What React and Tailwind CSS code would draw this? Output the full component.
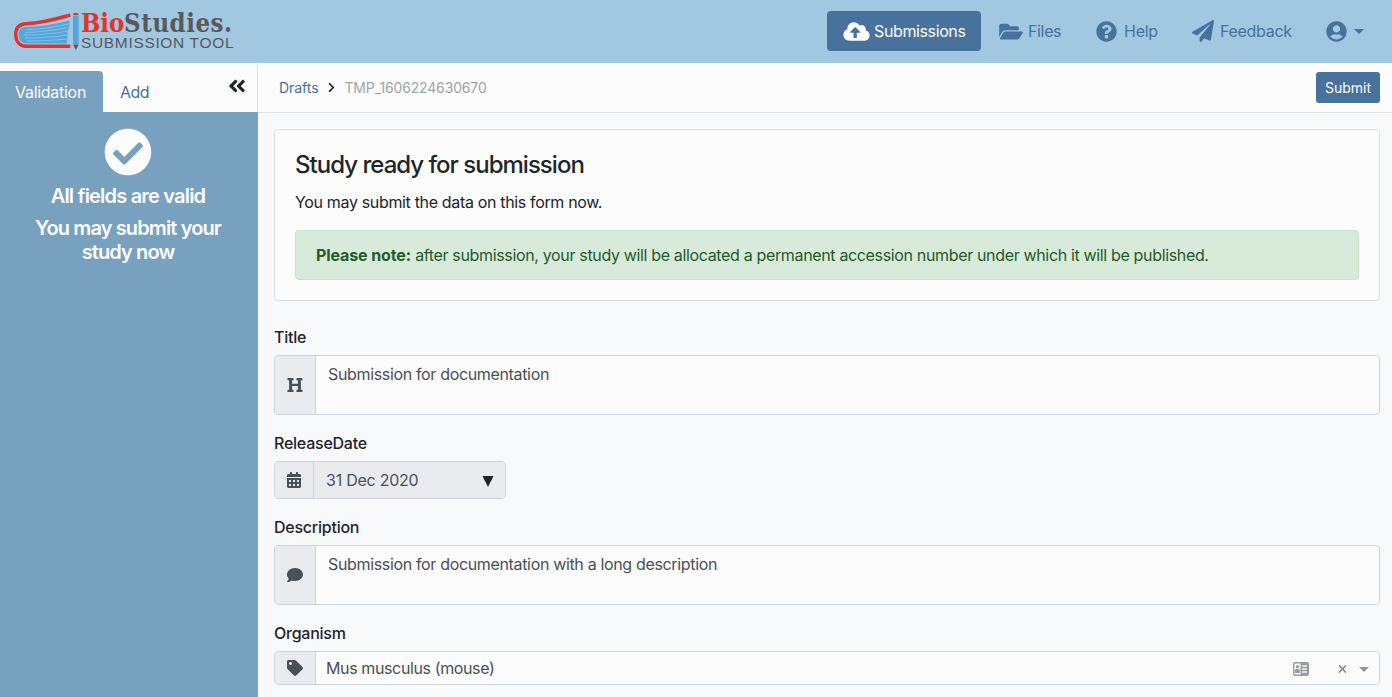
import React from "react";
import {
  FaAngleDoubleLeft,
  FaCalendarAlt,
  FaCheckCircle,
  FaChevronRight,
  FaCloudUploadAlt,
  FaComment,
  FaFolderOpen,
  FaPaperPlane,
  FaQuestionCircle,
  FaTag,
  FaUserCircle,
} from "react-icons/fa";

function Logo() {
  return (
    <div className="flex h-[62px] items-start pl-3 pt-2.5">
      <svg className="block shrink-0" width="69" height="42" viewBox="12 10 69 42" role="img" aria-label="BioStudies">
        <path d="M70.300 15C58 18.500 44 23 26 23.700C19 24 15.700 28 15.700 34.500C15.700 42 20 46.300 27 46.300H70.300" fill="none" stroke="#e0352f" strokeWidth="3.400" />
        <path d="M69.500 20.500C56 24 40 26.600 27 26.800C21 27 18.500 29.500 18.500 35C18.500 40.500 22 43.500 28 43.500H66.500L67.500 39V32L69.500 26Z" fill="#54a7dd" />
        <g fill="none" stroke="#a2c7e1" strokeWidth="0.700">
          <path d="M27 29.500C42 29.500 55 27 69 23.800" />
          <path d="M25 32.300C42 32.300 54 30 68.500 27.500" />
          <path d="M24 35C42 35 54 33.500 68 31" />
          <path d="M25 38C42 38 54 37 67.500 35" />
          <path d="M27 41C42 41 54 40.300 67.500 39" />
        </g>
        <rect x="73" y="16" width="5.700" height="28" fill="#54a7dd" />
        <path d="M73 15.200C73 12 78.700 12 78.700 15.200Z" fill="#e0352f" />
        <path d="M73 44.500H78.700L75.900 50Z" fill="#58595b" />
      </svg>
      <div className="flex flex-col whitespace-nowrap">
        <div className="h-[25px] font-['DejaVu_Serif_Condensed','DejaVu_Serif',serif] text-[25.500px] font-bold leading-[26px] tracking-[0.550px] text-[#58595b]">
          <span className="tracking-[-0.100px] text-[#e0352f]">Bio</span>Studies.
        </div>
        <div className="h-4 font-['Liberation_Sans',sans-serif] text-[15.500px] leading-4 tracking-[0.660px] text-[#58595b]">SUBMISSION TOOL</div>
      </div>
    </div>
  );
}

function HeadingIcon() {
  return (
    <svg width="16" height="14" viewBox="0 0 16 14" fill="currentColor">
      <path d="M0.500 0H6.500V2.200H5.100V5.700H10.900V2.200H9.500V0H15.500V2.200H13.900V11.800H15.500V14H9.500V11.800H10.900V8.100H5.100V11.800H6.500V14H0.500V11.800H2.100V2.200H0.500Z" />
    </svg>
  );
}

function Header() {
  return (
    <header className="flex h-[63px] shrink-0 items-start justify-between bg-[#a2c7e1] text-[#48729b]">
      <Logo />
      <nav className="mt-[11px] flex h-10 items-center pr-[28px]">
        <a className="flex h-10 w-[154px] items-center rounded bg-[#48729b] pl-4 text-[#fcfcfc]">
          <FaCloudUploadAlt className="h-[21px] w-[27px] shrink-0" />
          <span className="ml-1 tracking-[-0.380px]">Submissions</span>
        </a>
        <a className="ml-[18px] flex w-[63px] items-center">
          <FaFolderOpen className="h-[21px] w-6 shrink-0" />
          <span className="ml-[5px] tracking-[-0.350px]">Files</span>
        </a>
        <a className="ml-[34px] flex w-[63px] items-center">
          <FaQuestionCircle className="size-[21px] shrink-0" />
          <span className="ml-[7px] tracking-[-0.250px]">Help</span>
        </a>
        <a className="ml-[33px] flex w-[100px] items-center">
          <FaPaperPlane className="size-[22px] shrink-0" />
          <span className="ml-[6px] tracking-[-0.300px]">Feedback</span>
        </a>
        <a className="ml-[34px] flex items-center">
          <FaUserCircle className="size-[21px] shrink-0" />
          <svg className="ml-[7px]" width="10" height="5" viewBox="0 0 10 5">
            <path d="M0 0H10L5 5Z" fill="currentColor" />
          </svg>
        </a>
      </nav>
    </header>
  );
}

function Sidebar() {
  return (
    <aside className="flex w-[258px] shrink-0 flex-col bg-[#78a0bf]">
      <div className="flex h-[49px] items-end border-r border-[#dee2e6] bg-[#fcfcfc]">
        <div className="flex h-[41px] w-[103px] items-center rounded-tr bg-[#78a0bf] pl-[15px] pt-px tracking-[-0.280px] text-[#fcfcfc]">Validation</div>
        <div className="flex h-[41px] items-center pl-[17px] pt-px tracking-[-0.600px] text-[#48729b]">Add</div>
        <FaAngleDoubleLeft className="mb-[16px] ml-auto mr-[10px] size-[20px] text-[#212529]" />
      </div>
      <div className="flex flex-col items-center pr-[2px] pt-4 text-center text-[20px] font-semibold leading-6 text-[#fcfcfc]">
        <FaCheckCircle className="size-[48px]" />
        <p className="mt-2 tracking-[-0.800px]">All fields are valid</p>
        <p className="mt-2 w-[200px] tracking-[-0.880px]">You may submit your study now</p>
      </div>
    </aside>
  );
}

function Field({ label, icon, addon, box, children }) {
  return (
    <div className="flex flex-col">
      <label className="mb-1.5 h-6 font-medium leading-6 tracking-[-0.240px] text-[#212529]">{label}</label>
      <div className={`flex overflow-hidden rounded border border-[#ced4da] bg-[#fcfcfc] text-[#495057] ${box}`}>
        <div className={`flex shrink-0 items-center justify-center border-r border-[#ced4da] bg-[#e9ebef] ${addon}`}>{icon}</div>
        {children}
      </div>
    </div>
  );
}

export default function App() {
  return (
    <div className="flex h-[697px] w-[1392px] flex-col overflow-hidden font-[Inter,sans-serif] text-base text-[#212529]">
      <Header />
      <div className="flex min-h-0 flex-1">
        <Sidebar />
        <main className="flex min-w-0 flex-1 flex-col bg-[#f8f9fb]">
          <div className="flex h-[50px] shrink-0 items-center border-b border-[#dee0e3] bg-[#fcfcfc] pl-[21px] pr-3 text-sm">
            <a className="tracking-[-0.050px] text-[#48729b]">Drafts</a>
            <FaChevronRight className="ml-2 size-[11px]" />
            <span className="ml-[7px] tracking-[-0.150px] text-[#a0a4a9]">TMP_1606224630670</span>
            <button className="ml-auto h-[31px] w-16 rounded-[3px] bg-[#48729b] text-[#fcfcfc]">Submit</button>
          </div>
          <div className="flex flex-col px-4 pr-3 pt-4">
            <section className="h-[172px] rounded border border-[#dcdee1] bg-[#fcfcfc] px-5 pt-5">
              <h1 className="text-2xl font-medium leading-[29px] tracking-[-0.980px]">Study ready for submission</h1>
              <p className="mt-[11px] leading-6 tracking-[-0.340px]">You may submit the data on this form now.</p>
              <div className="mt-4 flex h-[50px] items-center whitespace-pre rounded border border-[#c3e6cb] bg-[#d8ebda] px-5 tracking-[-0.345px] text-[#255a2b]">
                <b className="font-bold tracking-[-0.110px]">Please note:</b> after submission, your study will be allocated a permanent accession number under which it will be published.
              </div>
            </section>
            <form className="flex flex-col gap-4 pt-6">
              <Field label="Title" icon={<HeadingIcon />} addon="w-[41px]" box="h-[60px]">
                <div className="px-3 pt-1.5 tracking-[-0.340px]">Submission for documentation</div>
              </Field>
              <Field label="ReleaseDate" icon={<FaCalendarAlt className="size-4" />} addon="w-[39px]" box="h-[38px] w-[232px]">
                <div className="flex flex-1 items-center justify-between bg-[#e9ebef] pl-3 pr-[11px]">
                  <span className="tracking-[-0.250px]">31 Dec 2020</span>
                  <svg className="mt-0.5" width="12" height="11" viewBox="0 0 12 11">
                    <path d="M0.500 0H11.500L6 11Z" fill="#212529" />
                  </svg>
                </div>
              </Field>
              <Field label="Description" icon={<FaComment className="size-4" />} addon="w-[41px]" box="h-[60px]">
                <div className="px-3 pt-1.5 tracking-[-0.340px]">Submission for documentation with a long description</div>
              </Field>
              <Field label="Organism" icon={<FaTag className="size-4" />} addon="w-[41px]" box="h-[34px]">
                <div className="flex flex-1 items-center pl-2.5 pr-[10px]">
                  <span className="tracking-[-0.380px]">Mus musculus (mouse)</span>
                  <svg className="ml-auto mt-px" width="16" height="14" viewBox="0 0 16 14">
                    <rect x="0.750" y="0.750" width="14.500" height="12.500" rx="1.500" fill="none" stroke="#999b9d" strokeWidth="1.500" />
                    <path d="M7.500 1H15V13H7.500Z" fill="#999b9d" />
                    <path d="M9 4H14M9 7H14M9 10H14" stroke="#f1f3f3" strokeWidth="1.400" />
                    <circle cx="4.500" cy="4.700" r="1.600" fill="#999b9d" />
                    <path d="M2 11V8.500C2 6.300 6.800 6.300 6.800 8.500V11Z" fill="#999b9d" />
                  </svg>
                  <svg className="ml-[29px] mt-px" width="9" height="8" viewBox="0 0 9 8">
                    <path d="M1 0.500L8 7.500M8 0.500L1 7.500" stroke="#85888b" strokeWidth="1.600" />
                  </svg>
                  <svg className="ml-3 mt-[2px]" width="10" height="5" viewBox="0 0 10 5">
                    <path d="M0 0H10L5 5Z" fill="#929497" />
                  </svg>
                </div>
              </Field>
            </form>
          </div>
        </main>
      </div>
    </div>
  );
}
